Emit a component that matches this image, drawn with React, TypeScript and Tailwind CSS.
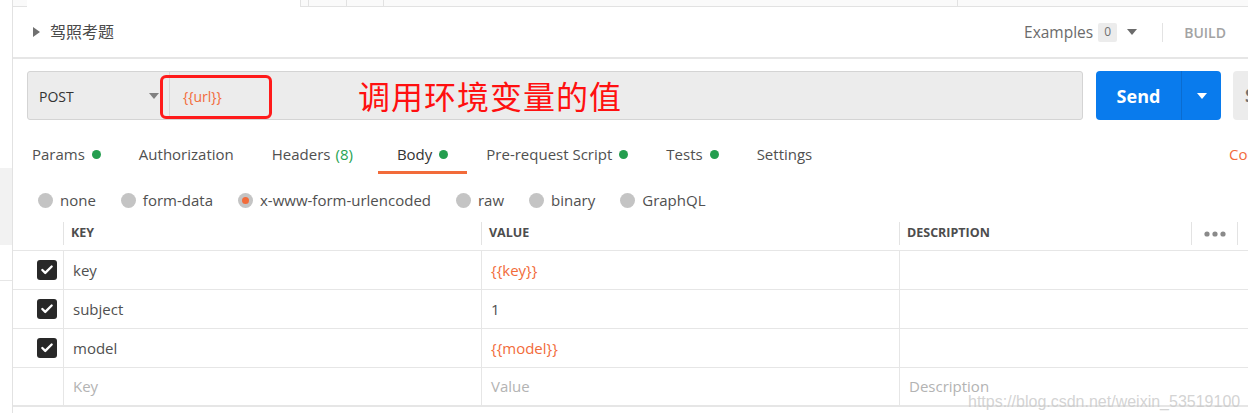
import React from "react";
import { Check } from "lucide-react";

const tabs = [
  { label: "Params", dot: true },
  { label: "Authorization" },
  { label: "Headers", count: "(8)" },
  { label: "Body", dot: true, active: true },
  { label: "Pre-request Script", dot: true },
  { label: "Tests", dot: true },
  { label: "Settings" },
];

const bodyModes = ["none", "form-data", "x-www-form-urlencoded", "raw", "binary", "GraphQL"];

const rows = [
  { key: "key", value: "{{key}}", variable: true },
  { key: "subject", value: "1", variable: false },
  { key: "model", value: "{{model}}", variable: true },
];

function Caret({ className = "" }: { className?: string }) {
  return (
    <svg width="10" height="6" viewBox="0 0 10 6" className={className}>
      <path d="M0 0h10L5 6z" fill="currentColor" />
    </svg>
  );
}

function HeaderSep() {
  return <div className="w-px h-[23px] bg-[#e3e3e3] shrink-0" />;
}

export default function App() {
  return (
    <div className="relative w-[1248px] h-[413px] overflow-hidden bg-white flex font-['Open_Sans','Noto_Sans_CJK_SC',sans-serif] text-[#505050]">
      {/* Sidebar edge */}
      <div className="w-[13px] shrink-0 border-r border-[#e2e2e2] flex flex-col">
        <div className="h-[168px]" />
        <div className="h-[77px] bg-[#f2f2f2]" />
        <div className="h-[35px]" />
        <div className="border-t border-[#e6e6e6]" />
      </div>

      <div className="flex-1 min-w-0 flex flex-col">
        {/* Tab strip */}
        <div className="h-[7px] flex shrink-0">
          <div className="w-[14px] bg-[#fafafa] border-b border-[#e2e2e2]" />
          <div className="w-[274px] bg-white border-r border-[#e2e2e2]" />
          <div className="w-[8px] bg-[#fafafa] border-b border-r border-[#e2e2e2]" />
          <div className="w-[38px] bg-[#fafafa] border-b border-r border-[#e2e2e2]" />
          <div className="w-[37px] bg-[#fafafa] border-b border-r border-[#e2e2e2]" />
          <div className="w-[574px] bg-[#fafafa] border-b border-r border-[#e2e2e2]" />
          <div className="flex-1 bg-[#fafafa] border-b border-[#e2e2e2]" />
        </div>

        {/* Request name + examples */}
        <div className="h-[52px] shrink-0 flex items-center pl-[20px] pr-[22px] border-b-2 border-[#e6e6e6]">
          <svg width="7" height="10" viewBox="0 0 7 10" className="text-[#707070]">
            <path d="M0 0l7 5-7 5z" fill="currentColor" />
          </svg>
          <span className="ml-[10px] text-[16px] text-[#4a4a4a]">驾照考题</span>
          <div className="ml-auto flex items-center">
            <span className="pt-[2px] text-[15.5px] text-[#6b6b6b]">Examples</span>
            <span className="ml-[5px] w-[19px] h-[19px] rounded-[2px] bg-[#ececec] text-[12px] text-[#707070] flex items-center justify-center">
              0
            </span>
            <Caret className="ml-[10px] text-[#6b6b6b]" />
            <div className="ml-[25px] w-px h-[19px] bg-[#e3e3e3]" />
            <span className="ml-[21px] text-[14px] font-semibold text-[#a3a3a3]">BUILD</span>
          </div>
        </div>

        {/* URL bar */}
        <div className="mt-[12px] h-[49px] shrink-0 flex pl-[14px]">
          <div className="relative w-[1056px] shrink-0 bg-[#ececec] border border-[#d4d4d4] rounded-[3px] flex">
            <div className="w-[142px] border-r border-[#d6d6d6] flex items-center justify-between pl-[11px] pr-[10px] pt-[1px]">
              <span className="text-[14px] text-[#333]">POST</span>
              <Caret className="text-[#808080]" />
            </div>
            <div className="flex items-center pl-[13px] pt-[1px] text-[14px] text-[#f26b3a]">{"{{url}}"}</div>
            <div className="absolute left-[132px] top-[3px] w-[112px] h-[44px] border-[3px] border-[#ff1a1a] rounded-[6px]" />
            <div className="absolute left-[330px] top-0 h-full flex items-center pt-[2px] text-[32px] tracking-[1px] text-[#ff1010]">
              调用环境变量的值
            </div>
          </div>
          <div className="ml-[13px] w-[125px] shrink-0 bg-[#097bed] rounded-[4px] flex text-white">
            <div className="w-[86px] border-r border-[#0a6cd0] flex items-center justify-center pt-[1px] text-[18px] font-bold">
              Send
            </div>
            <div className="flex-1 flex items-center justify-center">
              <Caret />
            </div>
          </div>
          <div className="ml-[12px] w-[80px] shrink-0 bg-[#ececec] rounded-[4px] flex items-center pl-[12px] text-[17px] font-bold text-[#707070]">
            Save
          </div>
        </div>

        {/* Request tabs */}
        <div className="mt-[16px] h-[38px] shrink-0 flex">
          {tabs.map((t) => (
            <div
              key={t.label}
              className={`h-full pl-[19px] pt-[2px] flex items-center border-b-[3px] text-[15px] ${
                t.count ? "pr-[25px]" : "pr-[19px]"
              } ${t.active ? "border-[#f26b3a] text-[#333]" : "border-transparent"}`}
            >
              <span>{t.label}</span>
              {t.count && <span className="ml-[5px] text-[#26a352]">{t.count}</span>}
              {t.dot && <span className="ml-[7px] w-[9px] h-[9px] rounded-full bg-[#249e4f]" />}
            </div>
          ))}
          <div className="ml-auto w-[19px] overflow-hidden whitespace-nowrap flex items-center pt-[2px] pb-[3px] text-[15px] text-[#f26b3a]">
            Cookies
          </div>
        </div>

        {/* Body mode radios */}
        <div className="mt-[12px] h-[28px] shrink-0 flex items-center pl-[25px] gap-[25px]">
          {bodyModes.map((m) => (
            <div key={m} className="flex items-center gap-[7px] text-[15px]">
              <span className="w-[15px] h-[15px] rounded-full bg-[#c4c4c4] flex items-center justify-center">
                {m === "x-www-form-urlencoded" && (
                  <span className="w-[7px] h-[7px] rounded-full bg-[#f26b3a]" />
                )}
              </span>
              <span>{m}</span>
            </div>
          ))}
        </div>

        {/* Key / value table */}
        <div className="mt-[6px] flex flex-col">
          <div className="h-[31px] flex items-center pb-[3px] border-b border-[#e6e6e6] text-[12.5px] font-bold text-[#4d4d4d]">
            <div className="w-[50px]" />
            <HeaderSep />
            <div className="w-[417px] pl-[7px]">KEY</div>
            <HeaderSep />
            <div className="w-[417px] pl-[7px]">VALUE</div>
            <HeaderSep />
            <div className="w-[291px] pl-[7px]">DESCRIPTION</div>
            <HeaderSep />
            <div className="w-[45px] flex justify-center">
              <svg width="22" height="6" viewBox="0 0 22 6">
                <circle cx="3" cy="3" r="2.6" fill="#8a8a8a" />
                <circle cx="11" cy="3" r="2.6" fill="#8a8a8a" />
                <circle cx="19" cy="3" r="2.6" fill="#8a8a8a" />
              </svg>
            </div>
            <HeaderSep />
          </div>

          {rows.map((r) => (
            <div key={r.key} className="h-[39px] flex border-b border-[#e6e6e6] text-[15px]">
              <div className="w-[51px] border-r border-[#e6e6e6] flex items-center justify-end pr-[6px]">
                <span className="w-[20px] h-[20px] rounded-[3px] bg-[#282828] flex items-center justify-center">
                  <Check size={14} strokeWidth={4} color="#fff" />
                </span>
              </div>
              <div className="w-[418px] border-r border-[#e6e6e6] flex items-center pl-[9px]">{r.key}</div>
              <div
                className={`w-[418px] border-r border-[#e6e6e6] flex items-center pl-[9px] ${
                  r.variable ? "text-[#f26b3a]" : ""
                }`}
              >
                {r.value}
              </div>
              <div className="flex-1" />
            </div>
          ))}

          <div className="h-[39px] flex border-b-2 border-[#e6e6e6] text-[15px] text-[#b3b3b3]">
            <div className="w-[51px] border-r border-[#e6e6e6]" />
            <div className="w-[418px] border-r border-[#e6e6e6] flex items-center pl-[9px]">Key</div>
            <div className="w-[418px] border-r border-[#e6e6e6] flex items-center pl-[9px]">Value</div>
            <div className="flex-1 flex items-center pl-[9px]">Description</div>
          </div>
        </div>
      </div>

      <div className="absolute left-[968px] top-[393px] text-[16px] leading-[18px] text-[#c8c8c8]/80 font-['Liberation_Sans',sans-serif]">
        https://blog.csdn.net/weixin_53519100
      </div>
    </div>
  );
}
